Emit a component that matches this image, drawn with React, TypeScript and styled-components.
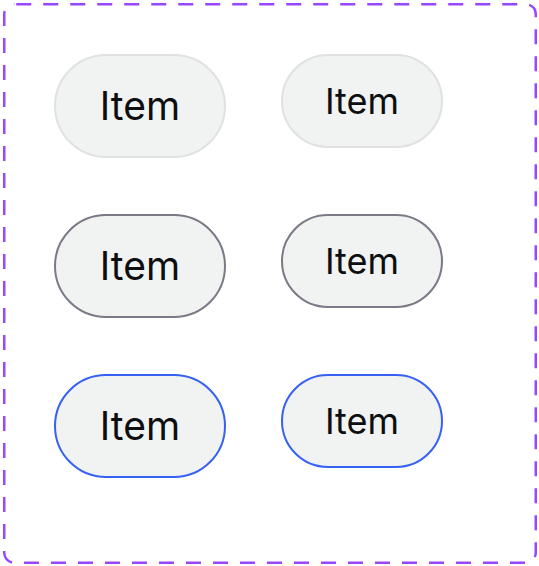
import React from "react";
import styled, { createGlobalStyle } from "styled-components";

const GlobalStyle = createGlobalStyle`
  html, body {
    margin: 0;
    padding: 0;
    background: #ffffff;
  }
  body {
    font-family: Inter, "Noto Sans", sans-serif;
  }
`;

const Frame = styled.div`
  position: relative;
  box-sizing: border-box;
  margin: 3px;
  width: 534px;
  height: 561px;
  padding: 51px 0 0 51px;
`;

const DashedOutline = styled.svg`
  position: absolute;
  inset: 0;
  pointer-events: none;
`;

const Grid = styled.div`
  display: grid;
  grid-template-columns: 172px 162px;
  column-gap: 55px;
  row-gap: 56px;
  align-items: start;
`;

type Variant = "default" | "hover" | "focus";
type Size = "lg" | "sm";

const borderColors: Record<Variant, string> = {
  default: "#dfe1e3",
  hover: "#7b7985",
  focus: "#3661f4",
};

const Pill = styled.div<{ $variant: Variant; $size: Size }>`
  box-sizing: border-box;
  display: flex;
  align-items: center;
  justify-content: center;
  width: ${(p) => (p.$size === "lg" ? "172px" : "162px")};
  height: ${(p) => (p.$size === "lg" ? "104px" : "94px")};
  border-radius: 999px;
  border: 2px solid ${(p) => borderColors[p.$variant]};
  background: #f1f2f2;
  color: #0e0e10;
  font-family: Inter, "Noto Sans", sans-serif;
  font-size: ${(p) => (p.$size === "lg" ? "39px" : "36px")};
  font-weight: 400;
  line-height: 1;
  padding-bottom: ${(p) => (p.$size === "lg" ? "2px" : "0px")};
`;

const rows: Variant[] = ["default", "hover", "focus"];

export default function App() {
  return (
    <>
      <GlobalStyle />
      <Frame>
        <DashedOutline width="534" height="561" viewBox="0 0 534 561">
          <rect
            x="1.25"
            y="1.25"
            width="531.5"
            height="558.5"
            rx="10"
            ry="10"
            fill="none"
            stroke="#9747ff"
            strokeWidth="2.5"
            strokeDasharray="15 12"
            strokeDashoffset="-2"
          />
        </DashedOutline>
        <Grid>
          {rows.map((v) => (
            <React.Fragment key={v}>
              <Pill $variant={v} $size="lg">Item</Pill>
              <Pill $variant={v} $size="sm">Item</Pill>
            </React.Fragment>
          ))}
        </Grid>
      </Frame>
    </>
  );
}
